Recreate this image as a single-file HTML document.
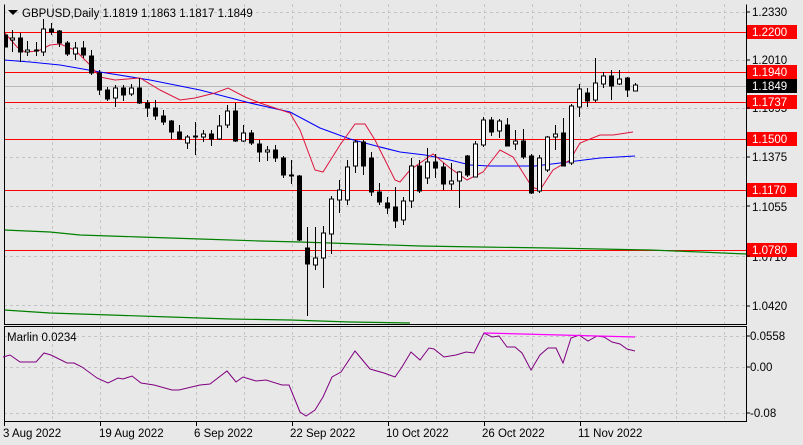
<!DOCTYPE html>
<html><head><meta charset="utf-8"><style>
html,body{margin:0;padding:0;background:#e8e8e8;}
svg{display:block;font-family:"Liberation Sans",sans-serif;font-size:11.5px;}
</style></head><body>
<svg width="803" height="445" viewBox="0 0 803 445" xmlns="http://www.w3.org/2000/svg">
<rect width="803" height="445" fill="#e8e8e8"/>
<!-- grid -->
<g stroke="#c4c4c4" stroke-dasharray="3,3" stroke-width="1">
<path d="M52.5 4V324M100.5 4V324M148.5 4V324M196.5 4V324M244.5 4V324M292.5 4V324M340.5 4V324M388.5 4V324M436.5 4V324M484.5 4V324M532.5 4V324M580.5 4V324M628.5 4V324M676.5 4V324M724.5 4V324"/>
<path d="M52.5 326V421M100.5 326V421M148.5 326V421M196.5 326V421M244.5 326V421M292.5 326V421M340.5 326V421M388.5 326V421M436.5 326V421M484.5 326V421M532.5 326V421M580.5 326V421M628.5 326V421M676.5 326V421M724.5 326V421"/>
<path d="M4 12.5H746M4 60.5H746M4 108.5H746M4 157.5H746M4 206.5H746M4 256.5H746M4 305.5H746M4 336.5H746M4 367.5H746M4 413.5H746"/>
</g>
<path d="M4 86.5H746" stroke="#b8b8b8"/>
<!-- red levels -->
<g stroke="#ff0000" stroke-width="1">
<path d="M4 32.5H746M4 72.5H746M4 102.5H746M4 139.5H746M4 190.5H746M4 250.5H746"/>
</g>
<!-- green lines -->
<polyline fill="none" stroke="#008000" stroke-width="1.2" points="4,230 50,232 80,235 140,237 200,239 260,241 300,242 360,244 420,246 480,247 550,248 600,249 650,250 700,252 746,254"/>
<polyline fill="none" stroke="#008000" stroke-width="1.2" points="4,310 50,313 110,315 170,317 230,319 290,320 350,322 410,323"/>
<!-- MAs -->
<polyline fill="none" stroke="#0000ff" stroke-width="1.1" points="4,60 30,62 60,65 100,72 150,80 200,90 250,103 290,112 320,128 350,139 380,147 400,152 425,155 450,160 470,165 490,166 535,166 560,163 600,158 635,156"/>
<polyline fill="none" stroke="#dc143c" stroke-width="1" points="4,32 17,47 25,52 38,51 50,45 60,44 75,50 90,65 100,77 115,80 140,78 160,90 180,100 195,98 215,93 228,88 245,97 260,103 290,113 300,130 315,170 323,172 340,145 355,124 365,124 375,140 395,180 400,182 410,170 433,154 450,168 467,180 483,172 500,150 513,157 532,187 540,190 553,170 570,160 580,143 600,135 613,135 633,132"/>
<!-- candles -->
<g stroke="#000" stroke-width="1" id="c"></g>
<!-- frames -->
<g fill="none" stroke="#000" stroke-width="1">
<path d="M4.5 4.5V324.5H746.5V4.5"/>
<rect x="4.5" y="326.5" width="742" height="95"/>
</g>
<!-- marlin -->
<polyline fill="none" stroke="#800080" stroke-width="1" points="3,357 10,355 20,362 36,362 44,353 51,355 67,363 74,363 82,367 97,378 108,383 118,378 123,379 132,376 141,383 154,385 172,390 179,390 200,385 210,384 227,371 236,382 243,377 256,381 266,380 282,385 289,385 300,412 306,416 315,410 323,397 332,377 341,372 355,351 370,369 384,373 395,377 402,367 411,352 420,360 429,348 434,349 444,357 456,355 466,352 474,353 484,333 492,337 499,336 507,347 515,347 522,353 531,370 540,355 548,348 556,348 563,363 571,338 579,335 588,341 597,336 604,337 612,342 620,344 627,349 635,351"/>
<polyline fill="none" stroke="#ff00ff" stroke-width="1.2" points="484,333 635,337"/>
<!-- text -->
<path d="M8 10h10l-5 5z" fill="#000"/>
<text x="22" y="17" fill="#000">GBPUSD,Daily  1.1819 1.1863 1.1817 1.1849</text>
<text x="7" y="341" fill="#000">Marlin 0.0234</text>
<g fill="#000">
<text x="752" y="16">1.2330</text>
<text x="752" y="64">1.2010</text>
<text x="752" y="112">1.1695</text>
<text x="752" y="161">1.1375</text>
<text x="752" y="211">1.1055</text>
<text x="752" y="261">1.0710</text>
<text x="752" y="310">1.0420</text>
<text x="750" y="340">0.0558</text>
<text x="750" y="371">0.00</text>
<text x="750" y="417">-0.08</text>
</g>
<g font-size="11.5">
<rect x="747" y="25" width="50" height="14" fill="#ff0000"/><text x="752" y="36" fill="#fff">1.2200</text>
<rect x="747" y="65" width="50" height="14" fill="#ff0000"/><text x="752" y="76" fill="#fff">1.1940</text>
<rect x="747" y="79" width="50" height="14" fill="#000"/><text x="752" y="90" fill="#fff">1.1849</text>
<rect x="747" y="95" width="50" height="14" fill="#ff0000"/><text x="752" y="106" fill="#fff">1.1737</text>
<rect x="747" y="132" width="50" height="14" fill="#ff0000"/><text x="752" y="143" fill="#fff">1.1500</text>
<rect x="747" y="183" width="50" height="14" fill="#ff0000"/><text x="752" y="194" fill="#fff">1.1170</text>
<rect x="747" y="243" width="50" height="14" fill="#ff0000"/><text x="752" y="254" fill="#fff">1.0780</text>
</g>
<path d="M746.5 12H750M746.5 60H750M746.5 108H750M746.5 157H750M746.5 206H750M746.5 256H750M746.5 306H750M746.5 336H750M746.5 367H750M746.5 413H750" stroke="#000"/>
<path d="M4.5 421V426M100.5 421V426M196.5 421V426M292.5 421V426M388.5 421V426M484.5 421V426M580.5 421V426" stroke="#000"/>
<g fill="#000">
<text x="3" y="437">3 Aug 2022</text>
<text x="99" y="437">19 Aug 2022</text>
<text x="194" y="437">6 Sep 2022</text>
<text x="290" y="437">22 Sep 2022</text>
<text x="386" y="437">10 Oct 2022</text>
<text x="482" y="437">26 Oct 2022</text>
<text x="578" y="437">11 Nov 2022</text>
</g>
<g stroke="#000" stroke-width="1">
<!-- x, bodyTop, bodyBottom, wickTop, wickBottom, fill -->
<line x1="4.5" y1="30" x2="4.5" y2="50"/><rect x="4.5" y="35" width="3" height="12" fill="#000"/>
<line x1="12.5" y1="30" x2="12.5" y2="52"/><rect x="10.5" y="38" width="4" height="2" fill="#fff"/>
<line x1="20.5" y1="33" x2="20.5" y2="62"/><rect x="18.5" y="38" width="4" height="14" fill="#000"/>
<line x1="27.5" y1="41" x2="27.5" y2="56"/><rect x="25.5" y="50" width="4" height="2" fill="#fff"/>
<line x1="36.5" y1="42" x2="36.5" y2="56"/><rect x="34.5" y="50" width="4" height="1" fill="#000"/>
<line x1="43.5" y1="19" x2="43.5" y2="56"/><rect x="41.5" y="29" width="4" height="23" fill="#fff"/>
<line x1="51.5" y1="23" x2="51.5" y2="35"/><rect x="49.5" y="29" width="4" height="3" fill="#000"/>
<line x1="59.5" y1="30" x2="59.5" y2="47"/><rect x="57.5" y="31" width="4" height="12" fill="#000"/>
<line x1="67.5" y1="41" x2="67.5" y2="56"/><rect x="65.5" y="43" width="4" height="11" fill="#000"/>
<line x1="75.5" y1="42" x2="75.5" y2="60"/><rect x="73.5" y="48" width="4" height="6" fill="#fff"/>
<line x1="83.5" y1="41" x2="83.5" y2="58"/><rect x="81.5" y="48" width="4" height="7" fill="#000"/>
<line x1="91.5" y1="50" x2="91.5" y2="75"/><rect x="89.5" y="56" width="4" height="17" fill="#000"/>
<line x1="99.5" y1="70" x2="99.5" y2="95"/><rect x="97.5" y="73" width="4" height="17" fill="#000"/>
<line x1="107.5" y1="87" x2="107.5" y2="101"/><rect x="105.5" y="90" width="4" height="9" fill="#000"/>
<line x1="115.5" y1="85" x2="115.5" y2="107"/><rect x="113.5" y="88" width="4" height="10" fill="#fff"/>
<line x1="123.5" y1="85" x2="123.5" y2="101"/><rect x="121.5" y="88" width="4" height="7" fill="#000"/>
<line x1="131.5" y1="84" x2="131.5" y2="96"/><rect x="129.5" y="88" width="4" height="6" fill="#fff"/>
<line x1="139.5" y1="78" x2="139.5" y2="104"/><rect x="137.5" y="88" width="4" height="15" fill="#000"/>
<line x1="147.5" y1="100" x2="147.5" y2="117"/><rect x="145.5" y="103" width="4" height="5" fill="#000"/>
<line x1="155.5" y1="100" x2="155.5" y2="120"/><rect x="153.5" y="108" width="4" height="8" fill="#000"/>
<line x1="163.5" y1="110" x2="163.5" y2="125"/><rect x="161.5" y="116" width="4" height="6" fill="#000"/>
<line x1="171.5" y1="120" x2="171.5" y2="139"/><rect x="169.5" y="121" width="4" height="11" fill="#000"/>
<line x1="179.5" y1="125" x2="179.5" y2="140"/><rect x="177.5" y="132" width="4" height="7" fill="#000"/>
<line x1="187.5" y1="135" x2="187.5" y2="149"/><rect x="185.5" y="137" width="4" height="6" fill="#fff"/>
<line x1="195.5" y1="122" x2="195.5" y2="155"/><rect x="193.5" y="136" width="4" height="1" fill="#000"/>
<line x1="203.5" y1="130" x2="203.5" y2="142"/><rect x="201.5" y="134" width="4" height="3" fill="#fff"/>
<line x1="211.5" y1="130" x2="211.5" y2="146"/><rect x="209.5" y="134" width="4" height="5" fill="#000"/>
<line x1="219.5" y1="115" x2="219.5" y2="140"/><rect x="217.5" y="126" width="4" height="13" fill="#fff"/>
<line x1="227.5" y1="105" x2="227.5" y2="128"/><rect x="225.5" y="111" width="4" height="14" fill="#fff"/>
<line x1="235.5" y1="103" x2="235.5" y2="142"/><rect x="233.5" y="111" width="4" height="30" fill="#000"/>
<line x1="243.5" y1="125" x2="243.5" y2="142"/><rect x="241.5" y="133" width="4" height="8" fill="#fff"/>
<line x1="251.5" y1="130" x2="251.5" y2="145"/><rect x="249.5" y="133" width="4" height="10" fill="#000"/>
<line x1="259.5" y1="140" x2="259.5" y2="162"/><rect x="257.5" y="144" width="4" height="8" fill="#000"/>
<line x1="267.5" y1="146" x2="267.5" y2="161"/><rect x="265.5" y="150" width="4" height="2" fill="#fff"/>
<line x1="275.5" y1="145" x2="275.5" y2="162"/><rect x="273.5" y="150" width="4" height="8" fill="#000"/>
<line x1="283.5" y1="156" x2="283.5" y2="178"/><rect x="281.5" y="158" width="4" height="17" fill="#000"/>
<line x1="291.5" y1="160" x2="291.5" y2="184"/><rect x="289.5" y="175" width="4" height="1" fill="#000"/>
<line x1="299.5" y1="175" x2="299.5" y2="241"/><rect x="297.5" y="176" width="4" height="64" fill="#000"/>
<line x1="307.5" y1="227" x2="307.5" y2="316"/><rect x="305.5" y="248" width="4" height="16" fill="#000"/>
<line x1="315.5" y1="227" x2="315.5" y2="270"/><rect x="313.5" y="258" width="4" height="7" fill="#fff"/>
<line x1="323.5" y1="226" x2="323.5" y2="288"/><rect x="321.5" y="233" width="4" height="25" fill="#fff"/>
<line x1="331.5" y1="196" x2="331.5" y2="254"/><rect x="329.5" y="199" width="4" height="35" fill="#fff"/>
<line x1="339.5" y1="180" x2="339.5" y2="213"/><rect x="337.5" y="190" width="4" height="10" fill="#fff"/>
<line x1="347.5" y1="160" x2="347.5" y2="205"/><rect x="345.5" y="167" width="4" height="33" fill="#fff"/>
<line x1="355.5" y1="140" x2="355.5" y2="173"/><rect x="353.5" y="142" width="4" height="24" fill="#fff"/>
<line x1="363.5" y1="140" x2="363.5" y2="175"/><rect x="361.5" y="142" width="4" height="24" fill="#000"/>
<line x1="371.5" y1="152" x2="371.5" y2="196"/><rect x="369.5" y="158" width="4" height="34" fill="#000"/>
<line x1="379.5" y1="183" x2="379.5" y2="205"/><rect x="377.5" y="192" width="4" height="10" fill="#000"/>
<line x1="387.5" y1="197" x2="387.5" y2="214"/><rect x="385.5" y="203" width="4" height="5" fill="#000"/>
<line x1="395.5" y1="187" x2="395.5" y2="228"/><rect x="393.5" y="207" width="4" height="14" fill="#000"/>
<line x1="403.5" y1="197" x2="403.5" y2="225"/><rect x="401.5" y="201" width="4" height="19" fill="#fff"/>
<line x1="411.5" y1="158" x2="411.5" y2="208"/><rect x="409.5" y="166" width="4" height="35" fill="#fff"/>
<line x1="419.5" y1="160" x2="419.5" y2="193"/><rect x="417.5" y="166" width="4" height="25" fill="#000"/>
<line x1="427.5" y1="148" x2="427.5" y2="184"/><rect x="425.5" y="162" width="4" height="16" fill="#fff"/>
<line x1="435.5" y1="154" x2="435.5" y2="178"/><rect x="433.5" y="162" width="4" height="6" fill="#000"/>
<line x1="443.5" y1="163" x2="443.5" y2="190"/><rect x="441.5" y="167" width="4" height="17" fill="#000"/>
<line x1="451.5" y1="163" x2="451.5" y2="190"/><rect x="449.5" y="181" width="4" height="3" fill="#fff"/>
<line x1="459.5" y1="171" x2="459.5" y2="208"/><rect x="457.5" y="172" width="4" height="9" fill="#fff"/>
<line x1="467.5" y1="155" x2="467.5" y2="177"/><rect x="465.5" y="156" width="4" height="19" fill="#000"/>
<line x1="475.5" y1="141" x2="475.5" y2="177"/><rect x="473.5" y="144" width="4" height="33" fill="#fff"/>
<line x1="483.5" y1="117" x2="483.5" y2="147"/><rect x="481.5" y="120" width="4" height="25" fill="#fff"/>
<line x1="491.5" y1="117" x2="491.5" y2="136"/><rect x="489.5" y="120" width="4" height="12" fill="#000"/>
<line x1="499.5" y1="119" x2="499.5" y2="138"/><rect x="497.5" y="121" width="4" height="10" fill="#fff"/>
<line x1="507.5" y1="118" x2="507.5" y2="146"/><rect x="505.5" y="125" width="4" height="21" fill="#000"/>
<line x1="515.5" y1="130" x2="515.5" y2="150"/><rect x="513.5" y="141" width="4" height="3" fill="#fff"/>
<line x1="523.5" y1="129" x2="523.5" y2="159"/><rect x="521.5" y="141" width="4" height="16" fill="#000"/>
<line x1="531.5" y1="154" x2="531.5" y2="194"/><rect x="529.5" y="156" width="4" height="37" fill="#000"/>
<line x1="539.5" y1="155" x2="539.5" y2="193"/><rect x="537.5" y="158" width="4" height="33" fill="#fff"/>
<line x1="547.5" y1="136" x2="547.5" y2="172"/><rect x="545.5" y="137" width="4" height="33" fill="#fff"/>
<line x1="555.5" y1="125" x2="555.5" y2="150"/><rect x="553.5" y="134" width="4" height="3" fill="#fff"/>
<line x1="563.5" y1="118" x2="563.5" y2="166"/><rect x="561.5" y="133" width="4" height="33" fill="#000"/>
<line x1="571.5" y1="104" x2="571.5" y2="165"/><rect x="569.5" y="106" width="4" height="57" fill="#fff"/>
<line x1="579.5" y1="84" x2="579.5" y2="117"/><rect x="577.5" y="89" width="4" height="18" fill="#fff"/>
<line x1="587.5" y1="88" x2="587.5" y2="107"/><rect x="585.5" y="93" width="4" height="8" fill="#000"/>
<line x1="595.5" y1="58" x2="595.5" y2="102"/><rect x="593.5" y="83" width="4" height="17" fill="#fff"/>
<line x1="603.5" y1="72" x2="603.5" y2="88"/><rect x="601.5" y="76" width="4" height="8" fill="#fff"/>
<line x1="611.5" y1="70" x2="611.5" y2="100"/><rect x="609.5" y="76" width="4" height="10" fill="#000"/>
<line x1="619.5" y1="70" x2="619.5" y2="85"/><rect x="617.5" y="79" width="4" height="5" fill="#fff"/>
<line x1="627.5" y1="77" x2="627.5" y2="97"/><rect x="625.5" y="78" width="4" height="12" fill="#000"/>
<line x1="635.5" y1="83" x2="635.5" y2="91"/><rect x="633.5" y="85" width="4" height="6" fill="#fff"/>
</g>
</svg>
</body></html>
